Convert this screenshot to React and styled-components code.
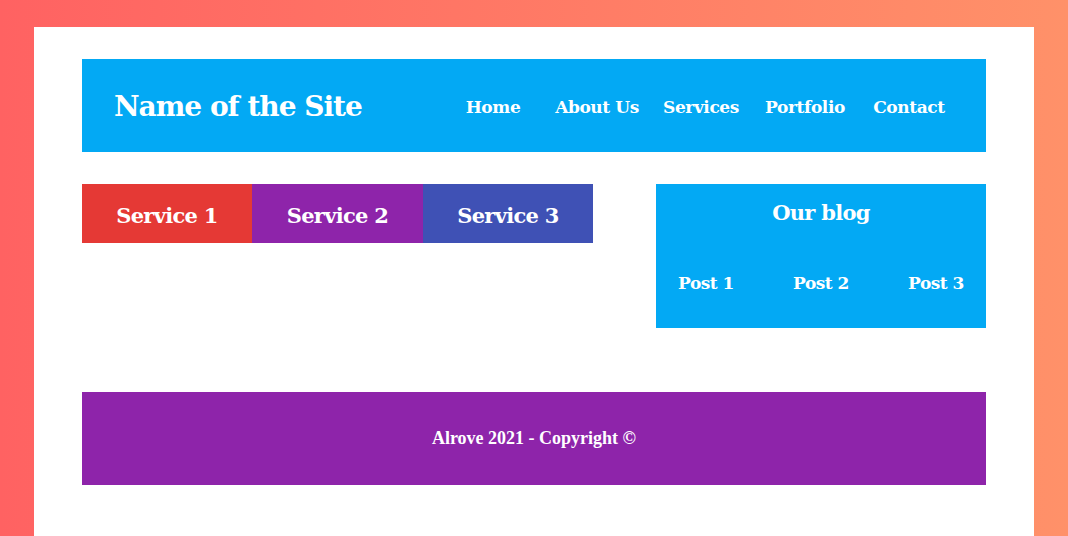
import styled, { createGlobalStyle } from "styled-components";

const GlobalStyle = createGlobalStyle`
  html, body {
    margin: 0;
    padding: 0;
  }
  body {
    height: 536px;
    overflow: hidden;
    background: linear-gradient(to right, #ff6262, #ff9169);
  }
`;

const navLinks = ["Home", "About Us", "Services", "Portfolio", "Contact"];
const services = [
  { label: "Service 1", color: "#e53935" },
  { label: "Service 2", color: "#8e24aa" },
  { label: "Service 3", color: "#3f51b5" },
];
const posts = ["Post 1", "Post 2", "Post 3"];

export default function App() {
  return (
    <>
      <GlobalStyle />
      <Page>
        <Container>
          <Header>
            <SiteName>Name of the Site</SiteName>
            <Nav>
              {navLinks.map((l) => (
                <NavItem key={l}>{l}</NavItem>
              ))}
            </Nav>
          </Header>

          <Content>
            <Services>
              {services.map((s) => (
                <ServiceTab key={s.label} $bg={s.color}>
                  {s.label}
                </ServiceTab>
              ))}
            </Services>

            <Blog>
              <BlogTitle>Our blog</BlogTitle>
              <PostList>
                {posts.map((p) => (
                  <PostItem key={p}>{p}</PostItem>
                ))}
              </PostList>
            </Blog>
          </Content>

          <Footer>Alrove 2021 - Copyright ©</Footer>
        </Container>
      </Page>
    </>
  );
}

const slab = `"DejaVu Serif", "Liberation Serif", serif`;

const Page = styled.div`
  padding: 27px 34px 0;
`;

const Container = styled.div`
  background: #fff;
  padding: 32px 48px 60px;
  display: flex;
  flex-direction: column;
  gap: 32px;
`;

const Header = styled.header`
  background: #03a9f4;
  height: 93px;
  padding: 2px 25px 0 32px;
  box-sizing: border-box;
  display: flex;
  align-items: center;
  justify-content: space-between;
  color: #fff;
`;

const SiteName = styled.h1`
  margin: 0;
  font-family: ${slab};
  font-weight: 600;
  font-size: 28px;
  letter-spacing: -1px;
`;

const Nav = styled.ul`
  margin: 0;
  padding: 0;
  list-style: none;
  display: flex;
`;

const NavItem = styled.li`
  width: 104px;
  text-align: center;
  font-family: ${slab};
  font-weight: bold;
  font-size: 17px;
  letter-spacing: -0.4px;
`;

const Content = styled.div`
  display: flex;
  justify-content: space-between;
  align-items: flex-start;
  margin-bottom: 32px;
`;

const Services = styled.div`
  display: grid;
  grid-template-columns: 170px 171px 170px;
`;

const ServiceTab = styled.div`
  height: 59px;
  box-sizing: border-box;
  padding-top: 4px;
  background: ${(p) => p.$bg};
  color: #fff;
  display: flex;
  align-items: center;
  justify-content: center;
  font-family: ${slab};
  font-weight: bold;
  font-size: 21px;
  letter-spacing: -0.7px;
`;

const Blog = styled.section`
  width: 330px;
  height: 144px;
  background: #03a9f4;
  color: #fff;
  display: flex;
  flex-direction: column;
  align-items: center;
  box-sizing: border-box;
  padding-top: 16px;
`;

const BlogTitle = styled.h2`
  margin: 0;
  font-family: ${slab};
  font-weight: 600;
  font-size: 21px;
  letter-spacing: -0.7px;
`;

const PostList = styled.ul`
  margin: 48px 0 0;
  padding: 0;
  list-style: none;
  display: grid;
  grid-template-columns: repeat(3, 115px);
`;

const PostItem = styled.li`
  text-align: center;
  font-family: ${slab};
  font-weight: bold;
  font-size: 17px;
  letter-spacing: -0.5px;
`;

const Footer = styled.footer`
  height: 93px;
  background: #8e24aa;
  color: #fff;
  display: flex;
  align-items: center;
  justify-content: center;
  font-family: "Liberation Serif", serif;
  font-weight: bold;
  font-size: 18px;
`;
